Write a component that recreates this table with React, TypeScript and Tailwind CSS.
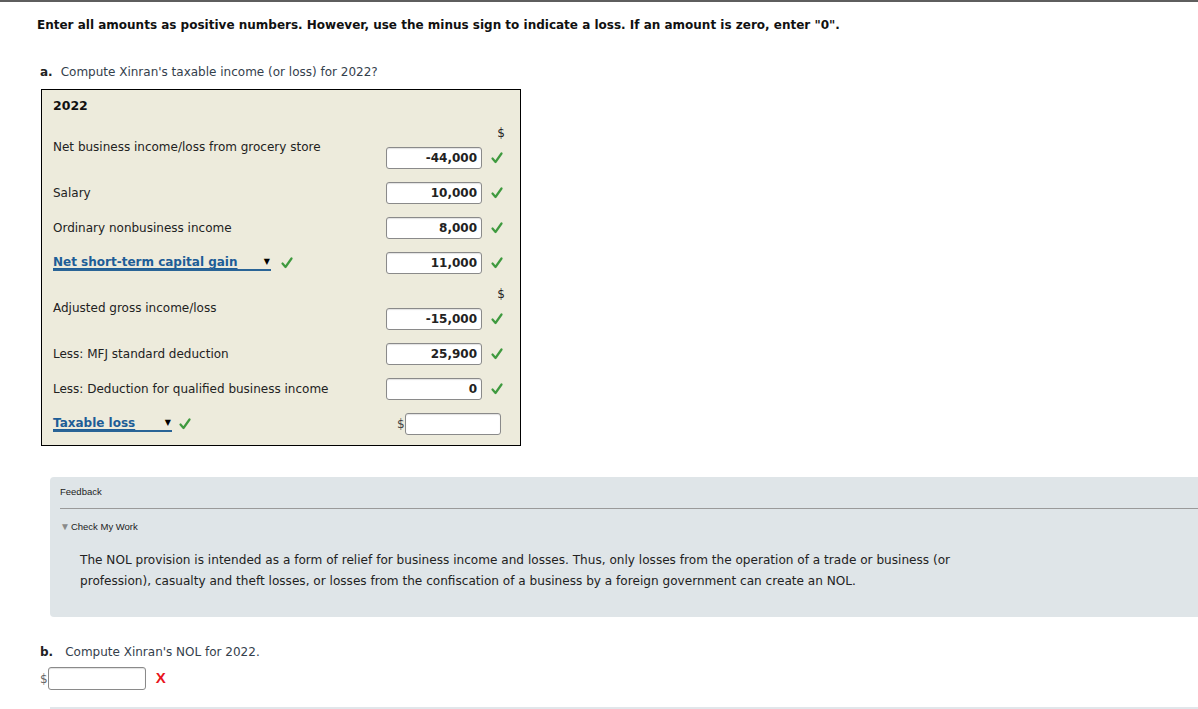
import React from "react";

const font = { fontFamily: '"DejaVu Sans", Verdana, sans-serif' };

function Check({ className = "" }: { className?: string }) {
  return (
    <svg width="12" height="12" viewBox="0 0 12 12" className={className}>
      <path d="M1.5 6.5 L4.5 10 L10.5 1.5" fill="none" stroke="#3f9a3f" strokeWidth="2.2" strokeLinecap="round" strokeLinejoin="round" />
    </svg>
  );
}

function Amount({ value, className = "" }: { value: string; className?: string }) {
  return (
    <div className={`h-[22px] w-[96px] rounded-[3px] border border-[#8a8a8a] bg-white px-[4px] text-right text-[12px] font-bold leading-[20px] text-[#222] shadow-[inset_0_1px_1px_rgba(0,0,0,0.12)] ${className}`}>
      {value}
    </div>
  );
}

function Select({ label, width }: { label: string; width: string }) {
  return (
    <div className={`flex h-[16px] items-center justify-between border-b-2 border-[#2a6496] text-[12px] font-bold leading-[14px] text-[#1d5d97] ${width}`}>
      <span className="underline decoration-1 underline-offset-2">{label}</span>
      <span className="mr-[1px] text-[8px] text-black">▼</span>
    </div>
  );
}

function Row({ label, value, dollar = false, mt }: { label: React.ReactNode; value: string; dollar?: boolean; mt: string }) {
  return (
    <div className={`flex items-center ${mt}`}>
      <div className="w-[333px] text-[12px] text-[#222]">{label}</div>
      <div className="flex flex-col items-start">
        {dollar && <div className="mb-[6px] flex h-[16px] w-[120px] items-center justify-end pr-[1px] text-[12px] text-[#222]">$</div>}
        <div className="flex items-center">
          <Amount value={value} />
          <Check className="ml-[9px]" />
        </div>
      </div>
    </div>
  );
}

export default function App() {
  return (
    <div className="relative min-h-[709px] w-[1198px] overflow-hidden bg-white" style={font}>
      <div className="h-[2px] w-full bg-[#5e5e5e]" />

      <div className="mt-[15px] pl-[37px] text-[12px] font-bold leading-[16px] text-[#111]">
        Enter all amounts as positive numbers. However, use the minus sign to indicate a loss. If an amount is zero, enter "0".
      </div>

      <div className="mt-[31px] pl-[40px] text-[12px] leading-[16px] text-[#34404c]">
        <span className="font-bold text-[#222]">a.</span>
        <span className="ml-[8px]">Compute Xinran's taxable income (or loss) for 2022?</span>
      </div>

      <div className="ml-[41px] mt-[9px] w-[480px] border border-black bg-[#edebdc] pb-[10px] pl-[11px]">
        <div className="pt-[8px] text-[12.5px] font-bold leading-[16px] text-[#111]">2022</div>
        <Row mt="mt-[11px]" dollar label="Net business income/loss from grocery store" value="-44,000" />
        <Row mt="mt-[13px]" label="Salary" value="10,000" />
        <Row mt="mt-[13px]" label="Ordinary nonbusiness income" value="8,000" />
        <Row
          mt="mt-[13px]"
          label={
            <div className="flex items-center">
              <Select label="Net short-term capital gain" width="w-[218px]" />
              <Check className="ml-[10px]" />
            </div>
          }
          value="11,000"
        />
        <Row mt="mt-[12px]" dollar label="Adjusted gross income/loss" value="-15,000" />
        <Row mt="mt-[13px]" label="Less: MFJ standard deduction" value="25,900" />
        <Row mt="mt-[13px]" label="Less: Deduction for qualified business income" value="0" />
        <div className="mt-[13px] flex items-center">
          <div className="flex w-[344px] items-center">
            <Select label="Taxable loss" width="w-[119px]" />
            <Check className="ml-[7px]" />
          </div>
          <span className="text-[12px] text-[#444]">$</span>
          <Amount value="" />
        </div>
      </div>

      <div className="ml-[50px] mt-[31px] h-[140px] rounded-l-[4px] bg-[#dfe5e8] pl-[10px] pt-[9px]">
        <div className="text-[9.5px] leading-[12px] text-[#222]" style={{ fontFamily: '"Liberation Sans", Arial, sans-serif' }}>
          Feedback
        </div>
        <div className="mt-[10px] h-px bg-[#9a9a9a]" />
        <div className="mt-[12px] flex items-center text-[9.5px] leading-[12px] text-[#222]" style={{ fontFamily: '"Liberation Sans", Arial, sans-serif' }}>
          <span className="mr-[1px] text-[10px] leading-[10px] text-[#8a8a8a]">▼</span>
          Check My Work
        </div>
        <p className="mt-[17px] pl-[20px] text-[12.1px] leading-[21px] text-[#222]">
          The NOL provision is intended as a form of relief for business income and losses. Thus, only losses from the operation of a trade or business (or
          <br />
          profession), casualty and theft losses, or losses from the confiscation of a business by a foreign government can create an NOL.
        </p>
      </div>

      <div className="mt-[27px] pl-[40px] text-[12px] leading-[16px] text-[#34404c]">
        <span className="font-bold text-[#222]">b.</span>
        <span className="ml-[12px]">Compute Xinran's NOL for 2022.</span>
      </div>
      <div className="mt-[7px] flex items-center pl-[40px]">
        <span className="text-[12px] text-[#666]">$</span>
        <div className="h-[23px] w-[98px] rounded-[3px] border border-[#8a8a8a] bg-white shadow-[inset_0_1px_1px_rgba(0,0,0,0.12)]" />
        <span className="ml-[10px] text-[15px] font-bold text-[#e8141c]" style={{ fontFamily: '"Liberation Sans", Arial, sans-serif' }}>
          X
        </span>
      </div>
      <div className="ml-[50px] mt-[17px] h-[2px] bg-[#e1e6ea]" />
    </div>
  );
}
